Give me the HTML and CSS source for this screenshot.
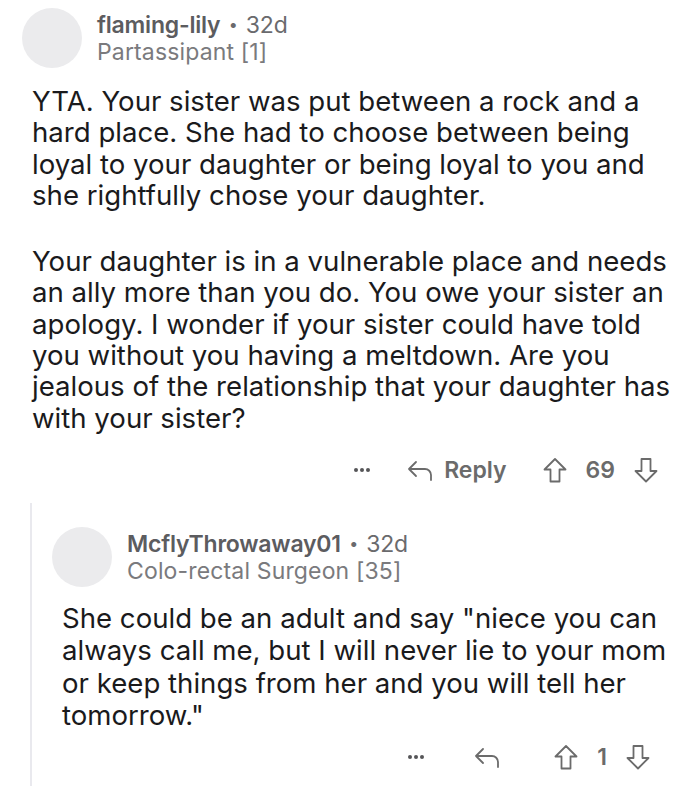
FILE: index.html
```html
<!DOCTYPE html>
<html>
<head>
<meta charset="utf-8">
<link rel="stylesheet" href="styles.css">
</head>
<body>
<div class="comment">
  <div class="head">
    <div class="avatar"></div>
    <div class="meta">
      <div class="line1"><span class="user">flaming-lily</span> <span class="dot">•</span> 32d</div>
      <div class="flair">Partassipant [1]</div>
    </div>
  </div>
  <div class="body">
    <p>YTA. Your sister was put between a rock and a<br>hard place. She had to choose between being<br>loyal to your daughter or being loyal to you and<br>she rightfully chose your daughter.</p>
    <p>Your daughter is in a vulnerable place and needs<br>an ally more than you do. You owe your sister an<br>apology. I wonder if your sister could have told<br>you without you having a meltdown. Are you<br>jealous of the relationship that your daughter has<br>with your sister?</p>
  </div>
  <div class="actions">
    <span class="more"><i></i><i></i><i></i></span>
    <span class="reply">
      <svg viewBox="0 0 28 24" width="28" height="24"><path d="M10 4 L3 11 L10 18 M3 11 H19 a6 6 0 0 1 6 6 V22" fill="none" stroke="#6b6b6b" stroke-width="1.8" stroke-linecap="round" stroke-linejoin="round"/></svg>
      <b>Reply</b>
    </span>
    <span class="vote">
      <svg class="up" viewBox="0 0 26 26" width="26" height="26"><path d="M13 2 L2.5 12.5 H8.5 V24.5 H17.5 V12.5 H23.5 Z" fill="none" stroke="#6b6b6b" stroke-width="1.8" stroke-linejoin="round"/></svg>
      <b>69</b>
      <svg class="down" viewBox="0 0 26 26" width="26" height="26"><path d="M13 24.5 L2.5 14 H8.5 V2 H17.5 V14 H23.5 Z" fill="none" stroke="#6b6b6b" stroke-width="1.8" stroke-linejoin="round"/></svg>
    </span>
  </div>
  <div class="thread">
    <div class="head">
      <div class="avatar"></div>
      <div class="meta">
        <div class="line1"><span class="user">McflyThrowaway01</span> <span class="dot">•</span> 32d</div>
        <div class="flair">Colo-rectal Surgeon [35]</div>
      </div>
    </div>
    <div class="body reply-body">
      <p>She could be an adult and say "niece you can<br>always call me, but I will never lie to your mom<br>or keep things from her and you will tell her<br>tomorrow."</p>
    </div>
    <div class="actions small">
      <span class="more"><i></i><i></i><i></i></span>
      <span class="reply">
        <svg viewBox="0 0 28 24" width="28" height="24"><path d="M10 4 L3 11 L10 18 M3 11 H19 a6 6 0 0 1 6 6 V22" fill="none" stroke="#6b6b6b" stroke-width="1.8" stroke-linecap="round" stroke-linejoin="round"/></svg>
      </span>
      <span class="vote">
        <svg class="up" viewBox="0 0 26 26" width="26" height="26"><path d="M13 2 L2.5 12.5 H8.5 V24.5 H17.5 V12.5 H23.5 Z" fill="none" stroke="#6b6b6b" stroke-width="1.8" stroke-linejoin="round"/></svg>
        <b>1</b>
        <svg class="down" viewBox="0 0 26 26" width="26" height="26"><path d="M13 24.5 L2.5 14 H8.5 V2 H17.5 V14 H23.5 Z" fill="none" stroke="#6b6b6b" stroke-width="1.8" stroke-linejoin="round"/></svg>
      </span>
    </div>
  </div>
</div>
</body>
</html>
```

FILE: styles.css
```css
html, body {
  margin: 0;
  padding: 0;
  background: #ffffff;
}
body {
  font-family: "Inter", "Roboto", "Liberation Sans", sans-serif;
  color: #1a1a1c;
  width: 700px;
  height: 786px;
  overflow: hidden;
}
.comment {
  box-sizing: border-box;
  height: 786px;
  padding: 8px 0 0 22px;
  display: flex;
  flex-direction: column;
}
.head {
  display: flex;
  align-items: flex-start;
  gap: 15px;
}
.avatar {
  width: 60px;
  height: 60px;
  border-radius: 50%;
  background: #ebebed;
  flex: none;
}
.meta {
  padding-top: 3px;
  font-size: 23px;
  line-height: 27px;
  letter-spacing: -0.2px;
}
.line1 {
  color: #6a6a6d;
}
.user {
  font-weight: 600;
  color: #5c5c5f;
}
.dot {
  font-size: 16px;
  vertical-align: 3px;
  margin: 0 2px;
}
.flair {
  color: #7a7a7d;
  letter-spacing: 0.15px;
}
.body {
  margin: 18px 0 0 10px;
  font-size: 27.6px;
  line-height: 31.3px;
  white-space: nowrap;
}
.body p {
  margin: 0 0 35px 0;
}
.body p:last-child {
  margin-bottom: 0;
}
.actions {
  display: flex;
  justify-content: flex-end;
  align-items: center;
  padding-right: 41px;
  margin-top: 22px;
  height: 28px;
  flex: none;
  color: #6b6b6b;
  font-size: 23px;
}
.more {
  display: flex;
  gap: 2px;
  margin-right: 36px;
}
.more i {
  width: 4px;
  height: 4px;
  border-radius: 50%;
  background: #555558;
}
.reply {
  display: flex;
  align-items: center;
  gap: 10px;
  margin-right: 35px;
}
.reply b, .vote b {
  font-weight: 600;
  color: #6b6b6b;
}
.vote {
  display: flex;
  align-items: center;
  gap: 18px;
}
.thread {
  flex: 1;
  margin: 19px 0 0 8px;
  border-left: 2px solid #e9e9ee;
  padding: 24px 0 0 20px;
}
.thread .body.reply-body {
  margin: 15px 0 0 10px;
  line-height: 32.3px;
}
.actions.small {
  margin-top: 12px;
  padding-right: 49px;
}
.actions.small .more {
  margin-right: 49px;
}
.actions.small .reply {
  margin-right: 52px;
}
.actions.small .vote {
  gap: 18px;
}
```
